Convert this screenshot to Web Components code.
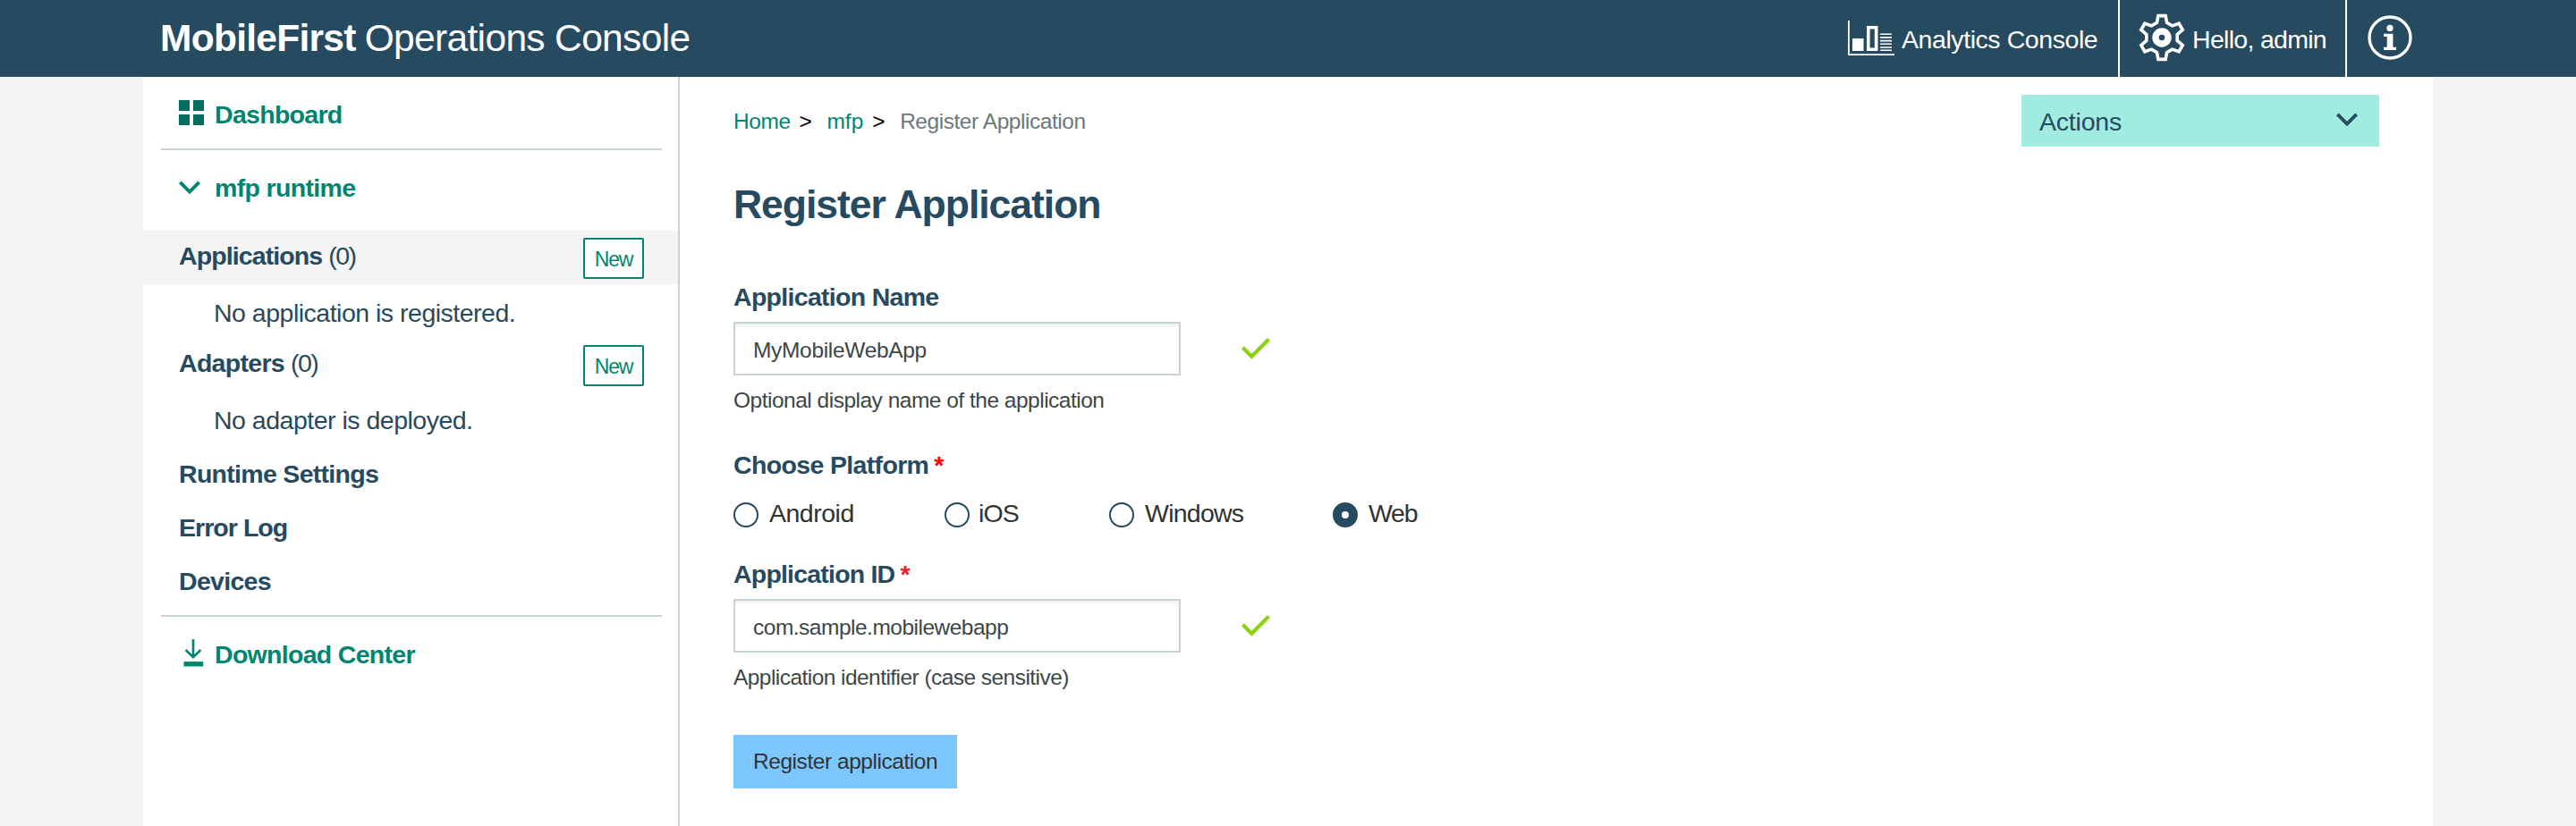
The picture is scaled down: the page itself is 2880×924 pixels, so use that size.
<!DOCTYPE html>
<html lang="en">
<head>
<meta charset="utf-8">
<title>MobileFirst Operations Console</title>
<style>
  body { margin: 0; background: #f4f4f4; font: 28.5px "Liberation Sans", Arial, sans-serif; color: #264a60; }
</style>
</head>
<body>
<mf-console></mf-console>
<script>
const define = (name, html) => {
  const t = document.createElement('template');
  t.innerHTML = html;
  customElements.define(name, class extends HTMLElement {
    constructor() {
      super();
      this.attachShadow({ mode: 'open' }).append(t.content.cloneNode(true));
    }
  });
};

/* Six-toothed cog outline, centred on the origin */
const cog = () => {
  const pts = [];
  for (let k = 0; k < 6; k++) {
    const a = k * Math.PI / 3, c = Math.cos(a), s = Math.sin(a);
    for (const [x, y] of [[-5.6, -16.6], [-4.1, -24.4], [4.1, -24.4], [5.6, -16.6]])
      pts.push((x * c - y * s).toFixed(2) + ',' + (x * s + y * c).toFixed(2));
  }
  return pts.join(' ');
};

define('mf-header', `
<style>
  :host { display: flex; height: 86px; background: #264a60; color: #fff; padding: 0 160px 0 179px; justify-content: space-between; line-height: 44px; white-space: nowrap; }
  .title { display: flex; align-items: center; gap: 10px; font-size: 42.5px; line-height: 86px; letter-spacing: -.66px; }
  .title b { letter-spacing: -.73px; }
  .tools { display: flex; }
  .cell { display: flex; align-items: center; box-sizing: border-box; border-right: 2px solid #fff; padding-top: 2px; }
  .an { width: 322px; padding-left: 17px; gap: 7px; letter-spacing: -.43px; }
  .us { width: 254px; padding-left: 20px; gap: 7px; letter-spacing: -.7px; }
  .in { width: 96px; padding-left: 22px; border: 0; }
  svg { display: block; margin-top: -2px; flex: none; }
</style>
<div class="title"><b>MobileFirst</b><span>Operations Console</span></div>
<div class="tools">
  <div class="cell an">
    <svg width="54" height="42" viewBox="0 0 54 42" fill="#fff">
      <path d="M1 1h1.8v37.2H53V40H1z"/><path d="M6 21h12.5v14H6z"/>
      <path fill-rule="evenodd" d="M22 7h12.5v28H22zM25.6 10.6v20.8h5.2V10.6z"/>
      <path d="M37 15.4h13v1.6H37zM37 19.1h13v1.6H37zM37 22.8h13v1.6H37zM37 26.5h13v1.6H37zM37 30.2h13v1.6H37zM37 33.5h13v1.6H37z"/>
    </svg><span>Analytics Console</span>
  </div>
  <div class="cell us">
    <svg width="54" height="56" viewBox="-27 -27 54 56" fill="none" stroke="#fff">
      <polygon points="${cog()}" stroke-width="3.6"/><circle r="7" stroke-width="7.4"/>
    </svg><span>Hello, admin</span>
  </div>
  <div class="cell in">
    <svg width="52" height="54" viewBox="-26 -26 52 54" fill="#fff">
      <circle r="23" fill="none" stroke="#fff" stroke-width="3.3"/><circle cy="-10.6" r="3.6"/>
      <path d="M-7-4.3H3.4V10.7H7V14H-7V10.7H-3.3V-1.1H-7z"/>
    </svg>
  </div>
</div>`);

define('mf-chevron', `
<style>:host { display: block; width: 24px; height: 16px; } svg { display: block; }</style>
<svg width="24" height="16" fill="none" stroke="currentColor" stroke-width="3.8"><path d="M1.4 1.8L12 12.6 22.6 1.8"/></svg>`);

define('mf-button-new', `
<style>:host { box-sizing: border-box; width: 68px; height: 46px; border: 2px solid #008571; border-radius: 2px; background: #fff; color: #008571; font-size: 23px; line-height: 44px; letter-spacing: -1.2px; text-align: center; }</style><slot></slot>`);

define('mf-sidebar', `
<style>
  :host { display: block; box-sizing: border-box; width: 600px; border-right: 2px solid #c8d2d2; padding-top: 4px; white-space: nowrap; letter-spacing: -.7px; }
  .head { display: flex; align-items: center; height: 76px; padding-left: 40px; color: #008571; font-weight: bold; }
  .head .ico { width: 40px; }
  .head.tall { height: 84px; }
  svg { display: block; }
  hr { margin: 0 18px 0 20px; border: 0; height: 2px; background: #c8d2d2; }
  .row { display: flex; justify-content: space-between; height: 60px; box-sizing: border-box; padding: 0 38px 0 40px; line-height: 56px; }
  .row.first { margin-top: 6px; background: #f4f4f4; }
  .row b + span { letter-spacing: -1.5px; margin-left: 7px; }
  mf-button-new { margin-top: 8px; display: block; }
  .sub { height: 60px; box-sizing: border-box; padding-left: 79px; line-height: 64px; letter-spacing: -.5px; }
  .row.plain { line-height: 64px; }
  .last { margin-bottom: 10px; }
</style>
<div class="head"><div class="ico"><svg width="28" height="32" fill="#006d5d"><path d="M0 0h12v12H0zM16 0h12v12H16zM0 16h12v12H0zM16 16h12v12H16z"/></svg></div>Dashboard</div>
<hr>
<div class="head tall"><div class="ico"><mf-chevron></mf-chevron></div><span style="letter-spacing:-.66px">mfp runtime</span></div>
<div class="row first"><div><b style="letter-spacing:-.9px">Applications</b><span>(0)</span></div><mf-button-new>New</mf-button-new></div>
<div class="sub">No application is registered.</div>
<div class="row"><div><b>Adapters</b><span>(0)</span></div><mf-button-new>New</mf-button-new></div>
<div class="sub">No adapter is deployed.</div>
<div class="row plain"><b>Runtime Settings</b></div>
<div class="row plain"><b style="letter-spacing:-.95px">Error Log</b></div>
<div class="row plain last"><b>Devices</b></div>
<hr>
<div class="head tall"><div class="ico"><svg width="28" height="34" fill="none" stroke="#008571" stroke-width="2.6"><path d="M16 0V20M7.6 12l8.4 8.2L24.4 12"/><path d="M5.5 27.8H27.2" stroke-width="5.4"/></svg></div>Download Center</div>`);

define('mf-breadcrumb', `
<style>
  :host { display: flex; font-size: 24.5px; line-height: 60px; letter-spacing: -.45px; color: #6d7777; white-space: nowrap; }
  span { color: #008571; } i { font-style: normal; color: #000; margin: 0 17px 0 10px; }
</style>
<span>Home</span><i>&gt;</i><span style="letter-spacing:0">mfp</span><i>&gt;</i><div>Register Application</div>`);

define('mf-actions', `
<style>
  :host { display: flex; align-items: center; justify-content: space-between; box-sizing: border-box; width: 400px; height: 58px; background: #a0ece0; padding: 2px 24px 0 20px; line-height: 44px; letter-spacing: -.2px; }
  mf-chevron { margin-top: -5px; }
</style><slot></slot><mf-chevron></mf-chevron>`);

define('mf-label', `
<style>:host { display: block; font-weight: bold; line-height: 40px; letter-spacing: -.7px; white-space: nowrap; }
::slotted(span) { letter-spacing: 0; margin-left: 6px; }</style><slot></slot>`);

define('mf-field', `
<style>
  :host { display: block; font-size: 24.5px; color: #3c4646; letter-spacing: -.5px; white-space: nowrap; }
  .line { display: flex; align-items: center; gap: 68px; margin-top: 8px; }
  .box { box-sizing: border-box; width: 500px; height: 60px; border: 2px solid #c8d2d2; background: #fff; box-shadow: inset 0 3px 3px rgba(0,0,0,.055); padding-left: 20px; line-height: 59px; }
  .help { margin-top: 8px; line-height: 39px; }
</style>
<div class="line"><div class="box"><slot name="value"></slot></div><svg width="32" height="24" fill="#8cd211"><path d="M0 12.3L11.3 23.7 32 3 29 0 11.3 17.7 3 9.3z"/></svg></div>
<div class="help"><slot name="help"></slot></div>`);

define('mf-radio', `
<style>
  :host { display: flex; gap: 12px; color: #323232; letter-spacing: -.5px; line-height: 24px; white-space: nowrap; }
  .dot { box-sizing: border-box; width: 28px; height: 28px; border: 2px solid #264a60; border-radius: 50%; flex: none; }
  :host([checked]) .dot { border-width: 10px; }
</style><div class="dot"></div><slot></slot>`);

define('mf-button', `
<style>:host { display: block; box-sizing: border-box; width: 250px; height: 60px; padding-left: 22px; background: #7cc7ff; color: #323232; font-size: 24.5px; line-height: 60px; letter-spacing: -.45px; white-space: nowrap; }</style><slot></slot>`);

define('mf-register', `
<style>
  :host { display: block; flex: 1; padding: 20px 60px 0; }
  .top { display: flex; justify-content: space-between; height: 58px; }
  h1 { margin: 35px 0 53px; font-size: 44.5px; line-height: 60px; letter-spacing: -1.03px; white-space: nowrap; }
  .choose { margin-top: 33px; letter-spacing: -.65px; }
  .radios { display: grid; grid-template-columns: 236px 184px 250px 120px; margin: 22px 0 32px; }
  mf-button { margin-top: 45px; }
</style>
<div class="top"><mf-breadcrumb></mf-breadcrumb><mf-actions>Actions</mf-actions></div>
<h1>Register Application</h1>
<mf-label>Application Name</mf-label>
<mf-field><span slot="value" style="letter-spacing:-.32px">MyMobileWebApp</span><span slot="help">Optional display name of the application</span></mf-field>
<mf-label class="choose">Choose Platform<span style="color:#f00">*</span></mf-label>
<div class="radios">
  <mf-radio>Android</mf-radio><mf-radio style="gap:10px;letter-spacing:-.9px">iOS</mf-radio><mf-radio style="letter-spacing:-.75px">Windows</mf-radio><mf-radio checked style="letter-spacing:-1.3px">Web</mf-radio>
</div>
<mf-label style="letter-spacing:-.8px">Application ID<span style="color:#e71d32">*</span></mf-label>
<mf-field><span slot="value">com.sample.mobilewebapp</span><span slot="help" style="letter-spacing:-.55px">Application identifier (case sensitive)</span></mf-field>
<mf-button>Register application</mf-button>`);

define('mf-console', `
<style>
  :host { display: flex; flex-direction: column; height: 924px; overflow: hidden; }
  .page { display: flex; flex: 1; margin: 0 160px; background: #fff; }
</style>
<mf-header></mf-header>
<div class="page"><mf-sidebar></mf-sidebar><mf-register></mf-register></div>`);
</script>
</body>
</html>
